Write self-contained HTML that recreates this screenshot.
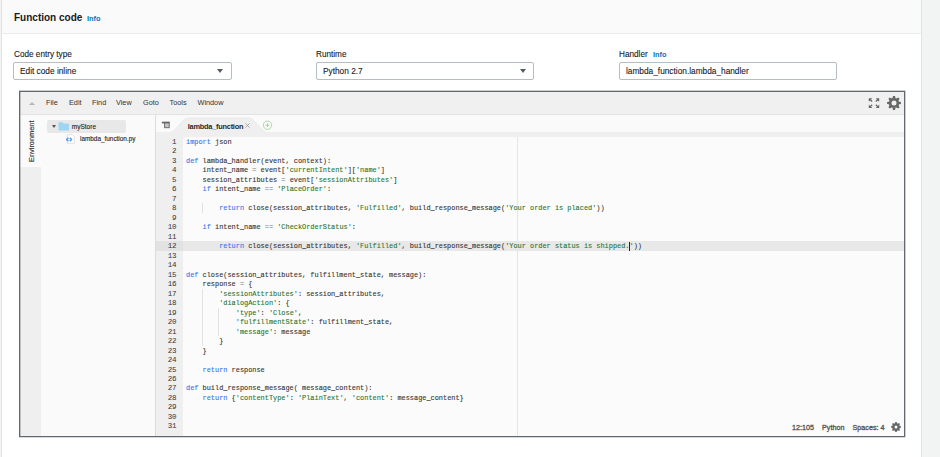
<!DOCTYPE html>
<html><head><meta charset="utf-8">
<style>
*{box-sizing:border-box;margin:0;padding:0}
html,body{width:940px;height:457px;overflow:hidden;background:#f2f3f3;font-family:"Liberation Sans",sans-serif;color:#16191f}
b{font-weight:normal}
#card{position:absolute;left:1px;top:-2px;width:921px;height:470px;background:#fff;border-left:1px solid #dfe3e3;border-right:1px solid #dfe3e3}
#hdr{position:absolute;left:2px;top:0;width:919px;height:34px;background:#fafafa;border-bottom:1px solid #eaeded}
.t{position:absolute;white-space:pre;line-height:1}
.lbl{font-size:8.2px;color:#16191f;-webkit-text-stroke:0.1px currentColor}
.info{font-size:7.3px;font-weight:bold;color:#0073bb}
.sel{position:absolute;top:62px;height:18px;border:1px solid #b3bfc0;border-radius:2px;background:#fff}
.sel .v{position:absolute;left:6px;top:4px;font-size:8.3px;color:#16191f;-webkit-text-stroke:0.1px currentColor;white-space:pre;line-height:1}
.arr{position:absolute;width:0;height:0;border-left:3px solid transparent;border-right:3px solid transparent;border-top:4.5px solid #545b64}
.r{position:absolute}
#ed{position:absolute;left:19px;top:90px;width:887px;height:347px;background:#efefef}
#edb{position:absolute;left:19px;top:91px;width:886px;height:346px;border:1px solid #62686e;box-shadow:inset 1px 0 0 rgba(120,126,132,0.4),1px 0 0 rgba(120,126,132,0.3),0 -1px 0 rgba(120,126,132,0.3),0 1px 0 rgba(120,126,132,0.3)}
.mn{position:absolute;top:99.2px;font-size:7.3px;color:#333;line-height:1;white-space:pre}
.gn{position:absolute;left:156px;width:20.1px;height:9.48px;text-align:right;font-family:"Liberation Mono",monospace;font-size:7.5px;letter-spacing:-0.356px;line-height:10.1px;color:#333;white-space:pre}
.ln{position:absolute;left:186px;height:9.48px;font-family:"Liberation Mono",monospace;font-size:8px;line-height:9.8px;transform-origin:0 0;transform:scaleX(0.8633);-webkit-text-stroke:0.12px currentColor;color:#333;white-space:pre}
.k{color:#3276ea}
.s{color:#287530}
.o{color:#6a7888}
.ig{position:absolute;width:1px;background:#e2e2e2}
.st{position:absolute;top:424px;font-size:7.2px;color:#545454;-webkit-text-stroke:0.3px currentColor;line-height:1;white-space:pre}
</style></head><body>
<div id="card"></div>
<div id="hdr"></div>
<div class="t" style="left:14px;top:13px;font-size:10px;font-weight:bold;color:#16191f">Function code</div>
<div class="t info" style="left:87px;top:15px">Info</div>

<div class="t lbl" style="left:14px;top:51px">Code entry type</div>
<div class="t lbl" style="left:316px;top:51px">Runtime</div>
<div class="t lbl" style="left:619px;top:51px">Handler</div>
<div class="t info" style="left:653px;top:51px">Info</div>

<div class="sel" style="left:13px;width:219px"><div class="v">Edit code inline</div><div class="arr" style="left:203.4px;top:6px"></div></div>
<div class="sel" style="left:316px;width:218px"><div class="v">Python 2.7</div><div class="arr" style="left:203.4px;top:6px"></div></div>
<div class="sel" style="left:619px;width:218px"><div class="v">lambda_function.lambda_handler</div></div>

<div id="ed"></div>
<!-- menubar -->
<div class="r" style="left:20px;top:91px;width:885px;height:24px;background:#f0f0f0;border-bottom:1px solid #e3e3e3"></div>
<div class="r" style="left:29px;top:101.5px;width:0;height:0;border-left:3px solid transparent;border-right:3px solid transparent;border-bottom:3.5px solid #b4b4b4"></div>
<div class="mn" style="left:46px">File</div>
<div class="mn" style="left:69px">Edit</div>
<div class="mn" style="left:92px">Find</div>
<div class="mn" style="left:116px">View</div>
<div class="mn" style="left:143px">Goto</div>
<div class="mn" style="left:169.5px">Tools</div>
<div class="mn" style="left:197.5px">Window</div>
<svg class="r" style="left:868px;top:98px" width="12" height="11" viewBox="0 0 12 11">
<g fill="#666">
<path d="M0.8 0.3h3.4l-1.2 1.2 1.6 1.6-0.9 0.9-1.6-1.6-1.3 1.3z"/>
<path d="M11.2 0.3h-3.4l1.2 1.2-1.6 1.6 0.9 0.9 1.6-1.6 1.3 1.3z"/>
<path d="M0.8 10h3.4l-1.2-1.2 1.6-1.6-0.9-0.9-1.6 1.6-1.3-1.3z"/>
<path d="M11.2 10h-3.4l1.2-1.2-1.6-1.6 0.9-0.9 1.6 1.6 1.3-1.3z"/>
</g></svg>
<svg class="r" style="left:886px;top:95px" width="16" height="16" viewBox="-8 -8 16 16"><g fill="#666"><circle r="5.1"/><path d="M4.40 -1.60L6.90 -1.00L6.90 1.00L4.40 1.60ZM4.24 1.98L5.59 4.17L4.17 5.59L1.98 4.24ZM1.60 4.40L1.00 6.90L-1.00 6.90L-1.60 4.40ZM-1.98 4.24L-4.17 5.59L-5.59 4.17L-4.24 1.98ZM-4.40 1.60L-6.90 1.00L-6.90 -1.00L-4.40 -1.60ZM-4.24 -1.98L-5.59 -4.17L-4.17 -5.59L-1.98 -4.24ZM-1.60 -4.40L-1.00 -6.90L1.00 -6.90L1.60 -4.40ZM1.98 -4.24L4.17 -5.59L5.59 -4.17L4.24 -1.98Z"/></g><circle r="2.5" fill="#f0f0f0"/></svg>

<!-- left column -->
<div class="r" style="left:20px;top:115px;width:21px;height:321px;background:#efefef"></div>
<div class="r" style="left:20px;top:115px;width:21px;height:52px;background:#fafafa"></div>
<div class="t" style="left:27.5px;top:161.5px;font-size:7.4px;color:#2a2a2a;-webkit-text-stroke:0.1px currentColor;transform-origin:0 0;transform:rotate(-90deg)">Environment</div>
<!-- tree -->
<div class="r" style="left:41px;top:115px;width:115px;height:321px;background:#fafafa;border-right:1px solid #dcdcdc"></div>
<div class="r" style="left:47px;top:120px;width:79px;height:12.5px;background:#e8e8e8;border-radius:2px"></div>
<div class="r" style="left:51.5px;top:124.5px;width:0;height:0;border-left:2px solid transparent;border-right:2px solid transparent;border-top:3.3px solid #555"></div>
<svg class="r" style="left:57.5px;top:121.5px" width="12" height="9" viewBox="0 0 12 9">
<path d="M0.4 1.3q0-1 1-1h2.6q0.6 0 0.9 0.5l0.4 0.7h4.8q1 0 1 1v5q0 1-1 1h-8.7q-1 0-1-1z" fill="#9dd5f3"/>
</svg>
<div class="t" style="left:71.8px;top:124px;font-size:6.5px;color:#262626;-webkit-text-stroke:0.12px currentColor">myStore</div>
<svg class="r" style="left:62px;top:132px" width="16" height="14" viewBox="0 0 16 14">
<path d="M5.4 2.7H10.4L12.4 4.7V11.3H5.4Z" fill="#fff" stroke="#d6d6d6" stroke-width="0.7"/>
<path d="M6.4 5.7L4.6 7.5L6.4 9.3M7.8 5.7L9.6 7.5L7.8 9.3" fill="none" stroke="#559be9" stroke-width="1.5" stroke-linejoin="round"/>
</svg>
<div class="t" style="left:80px;top:136.1px;font-size:6.4px;color:#262626;-webkit-text-stroke:0.12px currentColor">lambda_function.py</div>

<!-- tab bar -->
<div class="r" style="left:156px;top:115px;width:748px;height:17px;background:#fafafa"></div>
<svg class="r" style="left:161px;top:121px" width="10" height="8" viewBox="0 0 10 8">
<rect x="3.6" y="1.4" width="4.6" height="5.3" fill="#c4c4c4" stroke="#666" stroke-width="0.9"/>
<rect x="0.8" y="0.7" width="7.8" height="1.7" fill="#666"/>
</svg>
<svg class="r" style="left:171px;top:117px" width="95" height="16" viewBox="0 0 95 16">
<path d="M0 15.2C4 15.2 12 1 16 1H79C83 1 91 15.2 95 15.2V16H0Z" fill="#efefef" stroke="#e4e4e4" stroke-width="0.6"/>
</svg>
<div class="t" style="left:187.8px;top:122.9px;font-size:7.4px;letter-spacing:-0.25px;font-weight:bold;color:#2a2a2a">lambda_function</div>
<svg class="r" style="left:245px;top:123px" width="5" height="5" viewBox="0 0 5 5"><path d="M0.4 0.4L4.6 4.6M4.6 0.4L0.4 4.6" stroke="#999" stroke-width="0.8"/></svg>
<svg class="r" style="left:262px;top:119.5px" width="11" height="11" viewBox="0 0 11 11"><circle cx="5.5" cy="5.2" r="4.2" fill="none" stroke="#a3d6a3" stroke-width="0.9"/><path d="M5.5 3.4v3.6M3.7 5.2h3.6" stroke="#a3d6a3" stroke-width="1"/></svg>

<div class="r" style="left:156px;top:132px;width:748px;height:5px;background:#efefef"></div>
<!-- gutter + code -->
<div class="r" style="left:156px;top:137px;width:27px;height:299px;background:#efefef"></div>
<div class="r" style="left:183px;top:137px;width:721px;height:299px;background:#fbfbfb;border-top-left-radius:3px"></div>
<div class="r" style="left:517px;top:137px;width:1px;height:299px;background:#e6e6e6"></div>
<div class="r" style="left:156px;top:241.3px;width:27px;height:9.48px;background:#e2e2e2"></div>
<div class="r" style="left:183px;top:241.3px;width:721px;height:9.48px;background:#e8e8e8"></div>
<div class="ig" style="left:201.6px;top:203.4px;height:9.48px"></div>
<div class="ig" style="left:201.6px;top:288.7px;height:56.9px"></div>
<div class="ig" style="left:218.2px;top:307.6px;height:28.4px"></div>
<div class="gn" style="top:137.00px">1</div>
<div class="gn" style="top:146.48px">2</div>
<div class="gn" style="top:155.96px">3</div>
<div class="gn" style="top:165.44px">4</div>
<div class="gn" style="top:174.92px">5</div>
<div class="gn" style="top:184.40px">6</div>
<div class="gn" style="top:193.88px">7</div>
<div class="gn" style="top:203.36px">8</div>
<div class="gn" style="top:212.84px">9</div>
<div class="gn" style="top:222.32px">10</div>
<div class="gn" style="top:231.80px">11</div>
<div class="gn" style="top:241.28px">12</div>
<div class="gn" style="top:250.76px">13</div>
<div class="gn" style="top:260.24px">14</div>
<div class="gn" style="top:269.72px">15</div>
<div class="gn" style="top:279.20px">16</div>
<div class="gn" style="top:288.68px">17</div>
<div class="gn" style="top:298.16px">18</div>
<div class="gn" style="top:307.64px">19</div>
<div class="gn" style="top:317.12px">20</div>
<div class="gn" style="top:326.60px">21</div>
<div class="gn" style="top:336.08px">22</div>
<div class="gn" style="top:345.56px">23</div>
<div class="gn" style="top:355.04px">24</div>
<div class="gn" style="top:364.52px">25</div>
<div class="gn" style="top:374.00px">26</div>
<div class="gn" style="top:383.48px">27</div>
<div class="gn" style="top:392.96px">28</div>
<div class="gn" style="top:402.44px">29</div>
<div class="gn" style="top:411.92px">30</div>
<div class="gn" style="top:421.40px">31</div>
<div class="ln" style="top:137.00px"><b class="k">import</b> json</div>
<div class="ln" style="top:146.48px"></div>
<div class="ln" style="top:155.96px"><b class="k">def</b> lambda_handler(event, context):</div>
<div class="ln" style="top:165.44px">    intent_name <b class="o">=</b> event[<b class="s">'currentIntent'</b>][<b class="s">'name'</b>]</div>
<div class="ln" style="top:174.92px">    session_attributes <b class="o">=</b> event[<b class="s">'sessionAttributes'</b>]</div>
<div class="ln" style="top:184.40px">    <b class="k">if</b> intent_name <b class="o">==</b> <b class="s">'PlaceOrder'</b>:</div>
<div class="ln" style="top:193.88px"></div>
<div class="ln" style="top:203.36px">        <b class="k">return</b> close(session_attributes, <b class="s">'Fulfilled'</b>, build_response_message(<b class="s">'Your order is placed'</b>))</div>
<div class="ln" style="top:212.84px"></div>
<div class="ln" style="top:222.32px">    <b class="k">if</b> intent_name <b class="o">==</b> <b class="s">'CheckOrderStatus'</b>:</div>
<div class="ln" style="top:231.80px"></div>
<div class="ln" style="top:241.28px">        <b class="k">return</b> close(session_attributes, <b class="s">'Fulfilled'</b>, build_response_message(<b class="s">'Your order status is shipped.'</b>))</div>
<div class="ln" style="top:250.76px"></div>
<div class="ln" style="top:260.24px"></div>
<div class="ln" style="top:269.72px"><b class="k">def</b> close(session_attributes, fulfillment_state, message):</div>
<div class="ln" style="top:279.20px">    response <b class="o">=</b> {</div>
<div class="ln" style="top:288.68px">        <b class="s">'sessionAttributes'</b>: session_attributes,</div>
<div class="ln" style="top:298.16px">        <b class="s">'dialogAction'</b>: {</div>
<div class="ln" style="top:307.64px">            <b class="s">'type'</b>: <b class="s">'Close'</b>,</div>
<div class="ln" style="top:317.12px">            <b class="s">'fulfillmentState'</b>: fulfillment_state,</div>
<div class="ln" style="top:326.60px">            <b class="s">'message'</b>: message</div>
<div class="ln" style="top:336.08px">        }</div>
<div class="ln" style="top:345.56px">    }</div>
<div class="ln" style="top:355.04px"></div>
<div class="ln" style="top:364.52px">    <b class="k">return</b> response</div>
<div class="ln" style="top:374.00px"></div>
<div class="ln" style="top:383.48px"><b class="k">def</b> build_response_message( message_content):</div>
<div class="ln" style="top:392.96px">    <b class="k">return</b> {<b class="s">'contentType'</b>: <b class="s">'PlainText'</b>, <b class="s">'content'</b>: message_content}</div>
<div class="ln" style="top:402.44px"></div>
<div class="ln" style="top:411.92px"></div>
<div class="ln" style="top:421.40px"></div>
<div class="r" style="left:629px;top:241.5px;width:1px;height:9.2px;background:#222"></div>
<!-- status -->
<div class="st" style="left:792px">12:105</div>
<div class="st" style="left:822px">Python</div>
<div class="st" style="left:852.5px">Spaces: 4</div>
<svg class="r" style="left:889.5px;top:421px" width="12" height="12" viewBox="-6 -6 12 12"><g fill="#666"><circle r="3.7"/><path d="M2.90 -1.15L4.90 -0.75L4.90 0.75L2.90 1.15ZM2.86 1.24L4.00 2.93L2.93 4.00L1.24 2.86ZM1.15 2.90L0.75 4.90L-0.75 4.90L-1.15 2.90ZM-1.24 2.86L-2.93 4.00L-4.00 2.93L-2.86 1.24ZM-2.90 1.15L-4.90 0.75L-4.90 -0.75L-2.90 -1.15ZM-2.86 -1.24L-4.00 -2.93L-2.93 -4.00L-1.24 -2.86ZM-1.15 -2.90L-0.75 -4.90L0.75 -4.90L1.15 -2.90ZM1.24 -2.86L2.93 -4.00L4.00 -2.93L2.86 -1.24Z"/></g><circle r="1.5" fill="#fbfbfb"/></svg>
<div id="edb"></div>
</body></html>
